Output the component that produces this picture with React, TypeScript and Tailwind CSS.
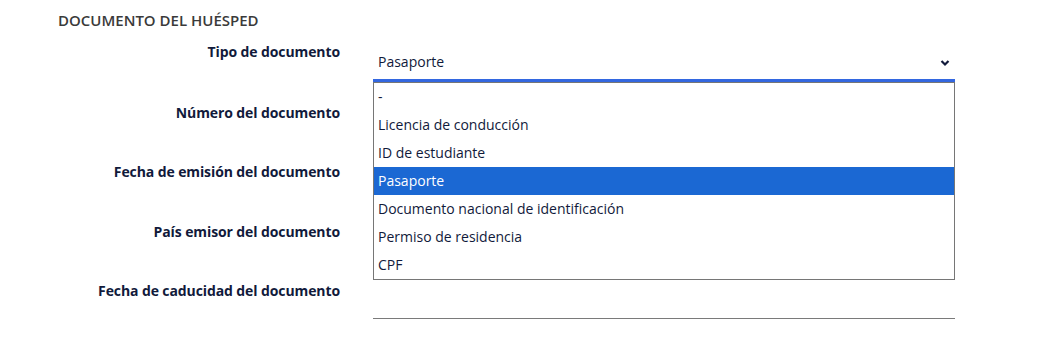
import React from "react";

const options = [
  "-",
  "Licencia de conducción",
  "ID de estudiante",
  "Pasaporte",
  "Documento nacional de identificación",
  "Permiso de residencia",
  "CPF",
];

const labels = [
  { text: "Tipo de documento", mt: "mt-[12px]" },
  { text: "Número del documento", mt: "mt-[21px]" },
  { text: "Fecha de emisión del documento", mt: "mt-[19px]" },
  { text: "País emisor del documento", mt: "mt-[20px]" },
  { text: "Fecha de caducidad del documento", mt: "mt-[19px]" },
];

export default function App() {
  return (
    <div
      className="relative w-[1056px] h-[343px] bg-white pl-[58px] pt-[10px]"
      style={{ fontFamily: '"Open Sans", "Noto Sans", sans-serif' }}
    >
      <h2 className="text-[15px] leading-[20px] font-semibold text-[#3a3a3a]">
        DOCUMENTO DEL HUÉSPED
      </h2>
      {labels.map((l, i) => (
        <div key={i} className={`flex h-[40px] ${l.mt}`}>
          <div className="w-[282px] text-right text-[14px] leading-[20px] font-bold text-[#111a3b] tracking-[-0.1px]">
            {l.text}
          </div>
          <div className="ml-[33px] w-[582px]">
            {i === 0 ? (
              <div className="flex h-[40px] items-start justify-between border-b-[3px] border-[#3367e0] pt-[10px] pl-[5px] pr-[5px]">
                <span className="text-[14px] leading-[20px] text-[#111a3b]">Pasaporte</span>
                <svg width="10" height="8" viewBox="0 0 10 8" className="mt-[7px]">
                  <polyline points="1.5,2 5,5.5 8.5,2" fill="none" stroke="#111a3b" strokeWidth="2.2" />
                </svg>
              </div>
            ) : (
              <div className="h-[38px] border-b border-[#7a7a7a]" />
            )}
          </div>
        </div>
      ))}
      <div className="absolute left-[373px] top-[82px] w-[582px] border border-[#767676] bg-white">
        {options.map((o, i) => (
          <div
            key={i}
            className={`h-[28px] pl-[4px] text-[14px] leading-[28px] ${
              i === 3 ? "bg-[#1b68d3] text-white" : "text-[#111a3b]"
            }`}
          >
            {o}
          </div>
        ))}
      </div>
    </div>
  );
}
